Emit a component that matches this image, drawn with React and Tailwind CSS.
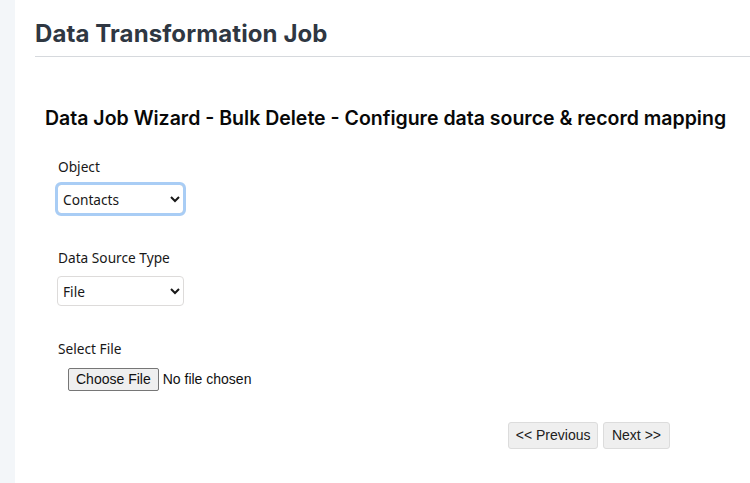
import React from 'react';

const labelFont = { fontFamily: '"Noto Sans", "Open Sans", sans-serif' };

const Field = ({ label, className = '', children }) => (
  <div className={`flex flex-col ${className}`}>
    <label className="pl-[1px] text-[13.7px] text-[#181818] leading-[18px] mb-[8px]">{label}</label>
    {children}
  </div>
);

export default function App() {
  return (
    <div className="flex w-[750px] h-[483px] bg-white overflow-hidden" style={labelFont}>
      <div className="w-[15px] shrink-0 bg-[#f3f6f9]" />
      <div className="flex-1 flex flex-col">
        {/* page title */}
        <div className="pl-[20px] pt-[18px]">
          <h1 className="font-['Inter',sans-serif] text-[24px] font-bold leading-[32px] text-[#2f3742] tracking-[0.1px]">
            Data Transformation Job
          </h1>
          <div className="mt-[6px] h-px bg-[#d6d9dd]" />
        </div>

        <div className="pl-[30px] pt-[48px]">
          <h2 className="font-['Inter',sans-serif] text-[19.5px] font-semibold leading-[26px] text-[#080808]">
            Data Job Wizard - Bulk Delete - Configure data source &amp; record mapping
          </h2>
        </div>

        <div className="pl-[42px] pt-[27px] flex flex-col gap-[35px]">
          <Field label="Object">
            <select
              defaultValue="Contacts"
              className="w-[127px] h-[30px] px-[1px] text-[13.7px] text-[#181818] bg-white border border-[#c9c9c9] rounded-[4px] outline-[3px] outline outline-[#a9cdf5] -outline-offset-1"
            >
              <option>Contacts</option>
              <option>Accounts</option>
              <option>Leads</option>
            </select>
          </Field>

          <Field label="Data Source Type">
            <select
              defaultValue="File"
              className="mt-[1px] w-[127px] h-[30px] px-[1px] text-[13.7px] text-[#181818] bg-white border border-[#dddbda] rounded-[4px]"
            >
              <option>File</option>
              <option>Query</option>
            </select>
          </Field>

          <Field label="Select File" className="-mt-[1px]">
            <div className="pl-[11px]">
              <input
                type="file"
                className="text-[14px] font-['Liberation_Sans',Arial,sans-serif] text-[#101010] file:mr-[4px] file:px-[7px] file:py-[0px] file:bg-[#efefef] file:border file:border-solid file:border-[#767676] file:rounded-[2px] file:text-[#101010]"
              />
            </div>
          </Field>
        </div>

        <div className="flex justify-end gap-[5px] pr-[80px] pt-[31px]">
          <button className="h-[27px] px-[6.5px] text-[14px] font-['Liberation_Sans',Arial,sans-serif] text-[#202020] bg-[#efefef] border border-[#dcdcdc] rounded-[3px]">
            &lt;&lt; Previous
          </button>
          <button className="h-[27px] px-[8px] text-[14px] font-['Liberation_Sans',Arial,sans-serif] text-[#202020] bg-[#efefef] border border-[#dcdcdc] rounded-[3px]">
            Next &gt;&gt;
          </button>
        </div>
      </div>
    </div>
  );
}
